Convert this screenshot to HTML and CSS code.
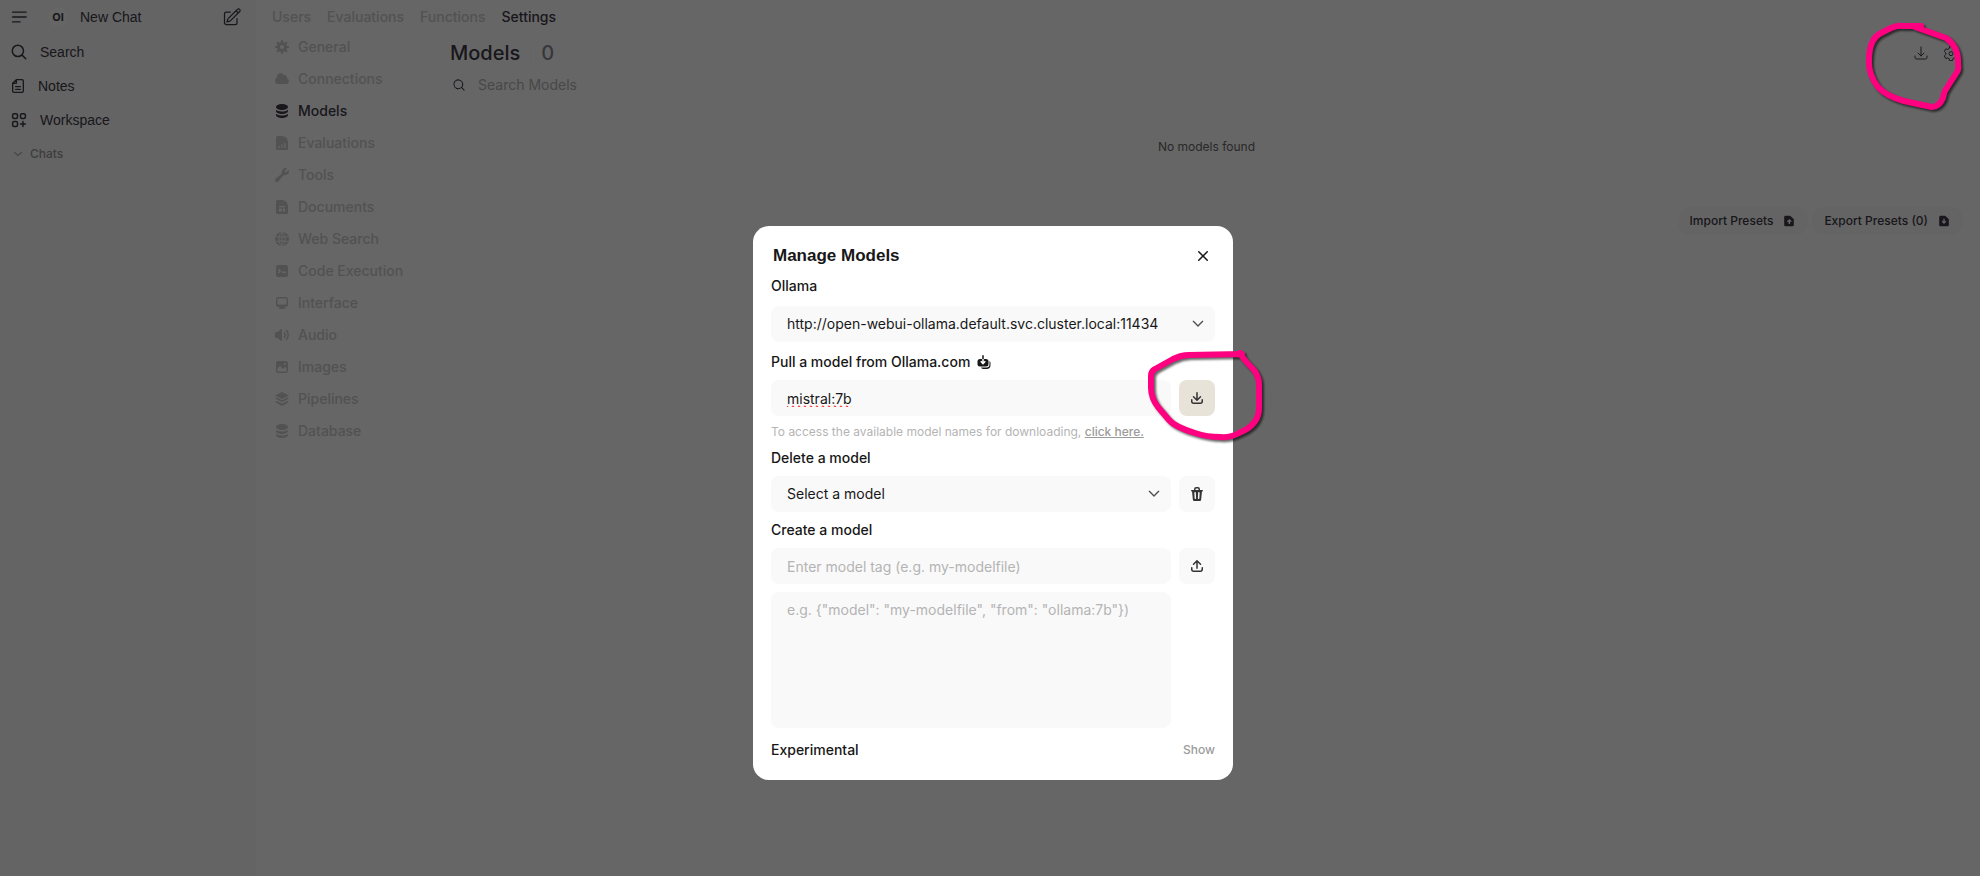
FILE: index.html
```html
<!DOCTYPE html>
<html lang="en">
<head>
    <meta charset="UTF-8">
    <meta name="viewport" content="width=device-width, initial-scale=1.0">
    <title>Open WebUI</title>
    <link rel="stylesheet" href="styles.css">
</head>
<body>
    <div class="app">
        <aside class="sidebar">
            <div class="sidebar-top">
                <button class="icon-button" aria-label="Toggle sidebar">
                    <svg class="icon-18" viewBox="0 0 24 24" fill="none" stroke="currentColor" stroke-width="1.8" stroke-linecap="round"><path d="M3.5 5.500h18M3.5 12h18M3.5 18.500h10"/></svg>
                </button>
                <a class="new-chat" href="#"><span class="logo">OI</span>New Chat</a>
                <button class="icon-button" aria-label="New chat">
                    <svg class="icon-20" viewBox="0 0 24 24" fill="none" stroke="currentColor" stroke-width="1.5" stroke-linecap="round" stroke-linejoin="round"><path d="m16.862 4.487 1.687-1.688a1.875 1.875 0 1 1 2.652 2.652L10.582 16.070a4.500 4.500 0 0 1-1.897 1.130L6 18l.8-2.685a4.500 4.500 0 0 1 1.130-1.897l8.932-8.931Zm0 0L19.500 7.125M18 14v4.750A2.250 2.250 0 0 1 15.750 21H5.250A2.250 2.250 0 0 1 3 18.750V8.250A2.250 2.250 0 0 1 5.250 6H10"/></svg>
                </button>
            </div>
            <nav class="sidebar-nav">
                <a class="sidebar-link" href="#">
                    <svg class="icon-18" viewBox="0 0 24 24" fill="none" stroke="currentColor" stroke-width="2" stroke-linecap="round"><circle cx="10.500" cy="10.500" r="7.500"/><path d="m21 21-5.200-5.200"/></svg>
                    Search
                </a>
                <a class="sidebar-link" href="#">
                    <svg class="icon-16" viewBox="0 0 24 24" fill="none" stroke="currentColor" stroke-width="2" stroke-linecap="round" stroke-linejoin="round"><path d="M9.500 2.500H18a2 2 0 0 1 2 2v15a2 2 0 0 1-2 2H6a2 2 0 0 1-2-2V8l5.500-5.500V8H4M8.500 13h7M8.500 17h7"/></svg>
                    Notes
                </a>
                <a class="sidebar-link" href="#">
                    <svg class="icon-18" viewBox="0 0 24 24" fill="none" stroke="currentColor" stroke-width="2" stroke-linecap="round" stroke-linejoin="round"><rect x="3.500" y="3.500" width="6.500" height="6.500" rx="2"/><rect x="14" y="3.500" width="6.500" height="6.500" rx="2"/><rect x="3.500" y="14" width="6.500" height="6.500" rx="2"/><path d="M17.250 14v6.500M14 17.250h6.500"/></svg>
                    Workspace
                </a>
            </nav>
            <button class="chats">
                <svg class="icon-12" viewBox="0 0 24 24" fill="none" stroke="currentColor" stroke-width="2.500" stroke-linecap="round" stroke-linejoin="round"><path d="m5 9 7 6 7-6"/></svg>
                Chats
            </button>
        </aside>

        <main class="main">
            <nav class="top-nav">
                <a href="#">Users</a>
                <a href="#">Evaluations</a>
                <a href="#">Functions</a>
                <a class="active" href="#">Settings</a>
            </nav>
            <div class="settings">
                <nav class="tabs">
                    <a href="#"><svg class="icon-16" viewBox="0 0 16 16" fill="currentColor"><path fill-rule="evenodd" d="M6.955 1.450A.5.5 0 0 1 7.452 1h1.096a.5.5 0 0 1 .497.450l.17 1.699c.484.120.940.312 1.356.562l1.321-1.081a.5.5 0 0 1 .67.033l.774.775a.5.5 0 0 1 .034.670l-1.080 1.320c.25.417.440.873.561 1.357l1.699.170a.5.5 0 0 1 .450.497v1.096a.5.5 0 0 1-.450.497l-1.699.170c-.120.484-.312.940-.562 1.356l1.082 1.322a.5.5 0 0 1-.034.670l-.774.774a.5.5 0 0 1-.670.033l-1.322-1.080c-.416.250-.872.440-1.356.561l-.170 1.699a.5.5 0 0 1-.497.450H7.452a.5.5 0 0 1-.497-.450l-.170-1.699a4.973 4.973 0 0 1-1.356-.562L4.108 13.370a.5.5 0 0 1-.670-.033l-.774-.775a.5.5 0 0 1-.034-.670l1.080-1.320a4.971 4.971 0 0 1-.561-1.357l-1.699-.170A.5.5 0 0 1 1 8.548V7.452a.5.5 0 0 1 .450-.497l1.699-.170c.120-.484.312-.940.562-1.356L2.629 4.107a.5.5 0 0 1 .034-.670l.774-.774a.5.5 0 0 1 .670-.033L5.430 3.710a4.970 4.970 0 0 1 1.356-.561l.170-1.699ZM6 8a2 2 0 1 0 4 0 2 2 0 0 0-4 0Z"/></svg>General</a>
                    <a href="#"><svg class="icon-16" viewBox="0 0 16 16" fill="currentColor"><path d="M1 9.500A3.500 3.500 0 0 0 4.500 13H12a3 3 0 0 0 .917-5.857 2.503 2.503 0 0 0-3.198-3.019 3.500 3.500 0 0 0-6.628 2.171A3.500 3.500 0 0 0 1 9.500Z"/></svg>Connections</a>
                    <a class="active" href="#"><svg class="icon-16" viewBox="0 0 16 16" fill="currentColor"><path d="M8 7c3.314 0 6-1.343 6-3s-2.686-3-6-3-6 1.343-6 3 2.686 3 6 3Z"/><path d="M8 8.500c1.840 0 3.579-.370 4.914-1.037A6.330 6.330 0 0 0 14 6.780V8c0 1.657-2.686 3-6 3S2 9.657 2 8V6.780c.346.273.720.500 1.087.683C4.420 8.131 6.160 8.500 8 8.500Z"/><path d="M8 12.500c1.840 0 3.579-.370 4.914-1.037.366-.183.740-.410 1.086-.684V12c0 1.657-2.686 3-6 3s-6-1.343-6-3v-1.220c.346.273.720.500 1.087.683C4.420 12.131 6.160 12.500 8 12.500Z"/></svg>Models</a>
                    <a href="#"><svg class="icon-16" viewBox="0 0 16 16" fill="currentColor"><path fill-rule="evenodd" d="M3.500 1A1.500 1.500 0 0 0 2 2.500v11A1.500 1.500 0 0 0 3.500 15h9a1.500 1.500 0 0 0 1.500-1.500V6l-5-5H3.500Zm1 10h1.300v2H4.500v-2Zm2.800-1.500h1.300V13H7.300V9.500ZM10.200 8h1.300v5h-1.300V8Z"/><path d="M10.500 1v3.500H14L10.500 1Z"/></svg>Evaluations</a>
                    <a href="#"><svg class="icon-16" viewBox="0 0 16 16" fill="currentColor"><path d="M11.500 8a3.500 3.500 0 0 0 3.362-4.476c-.094-.325-.497-.390-.736-.150L12.099 5.400a.480.480 0 0 1-.653.033 8.554 8.554 0 0 1-.879-.879.480.480 0 0 1 .033-.653l2.027-2.028c.240-.239.175-.642-.150-.736a3.502 3.502 0 0 0-4.476 3.427c.018.990-.133 2.093-.914 2.700l-5.310 4.130a2.015 2.015 0 1 0 2.828 2.827l4.130-5.309c.607-.780 1.710-.932 2.700-.914L11.500 8Z"/></svg>Tools</a>
                    <a href="#"><svg class="icon-16" viewBox="0 0 16 16" fill="currentColor"><path fill-rule="evenodd" d="M3.500 1A1.500 1.500 0 0 0 2 2.500v11A1.500 1.500 0 0 0 3.500 15h9a1.500 1.500 0 0 0 1.500-1.500V6L9 1H3.500ZM5 7h6v1.300H5V7Zm0 2.500h2.800v3H5v-3Zm4 0h2v3H9v-3Z"/><path d="M10.500 1v3.500H14L10.500 1Z"/></svg>Documents</a>
                    <a href="#"><svg class="icon-16" viewBox="0 0 16 16"><circle cx="8" cy="8" r="7" fill="currentColor"/><path class="cutout" d="M2 5.500q6 1.500 12 0M2 10.500q6-1.500 12 0M8 1v14M7.500 1C4 4.500 4 11.500 7.500 15M8.500 1c3.500 3.500 3.500 10.500 0 14" fill="none"/></svg>Web Search</a>
                    <a href="#"><svg class="icon-16" viewBox="0 0 16 16" fill="currentColor"><path fill-rule="evenodd" d="M2 4a2 2 0 0 1 2-2h8a2 2 0 0 1 2 2v8a2 2 0 0 1-2 2H4a2 2 0 0 1-2-2V4Zm2.220 1.970a.75.75 0 0 0 0 1.060l.970.970-.970.970a.75.75 0 1 0 1.060 1.060l1.500-1.500a.75.75 0 0 0 0-1.060l-1.500-1.500a.75.75 0 0 0-1.060 0ZM8.750 8.500a.75.75 0 0 0 0 1.500h2.500a.75.75 0 0 0 0-1.500h-2.500Z"/></svg>Code Execution</a>
                    <a href="#"><svg class="icon-16" viewBox="0 0 16 16" fill="currentColor"><path fill-rule="evenodd" d="M2 4.250A2.250 2.250 0 0 1 4.250 2h7.500A2.250 2.250 0 0 1 14 4.250v5.500A2.250 2.250 0 0 1 11.750 12h-1.312c.1.128.210.248.328.360a.75.75 0 0 1 .234.545v.345a.75.75 0 0 1-.75.75h-4.500a.75.75 0 0 1-.75-.75v-.345a.75.75 0 0 1 .234-.545c.118-.111.228-.232.328-.360H4.250A2.250 2.250 0 0 1 2 9.750v-5.500Zm2.250-.750a.75.75 0 0 0-.75.75v4.500c0 .414.336.75.75.75h7.500a.75.75 0 0 0 .75-.75v-4.500a.75.75 0 0 0-.75-.75h-7.500Z"/></svg>Interface</a>
                    <a href="#"><svg class="icon-16" viewBox="0 0 16 16" fill="currentColor"><path d="M7.557 2.066A.75.75 0 0 1 8 2.750v10.500a.75.75 0 0 1-1.248.560L3.590 11H2a1 1 0 0 1-1-1V6a1 1 0 0 1 1-1h1.590l3.162-2.810a.75.75 0 0 1 .805-.124ZM12.950 3.050a.75.75 0 1 0-1.060 1.060 5.500 5.500 0 0 1 0 7.780.75.75 0 1 0 1.060 1.060 7 7 0 0 0 0-9.900Z"/><path d="M10.828 5.172a.75.75 0 1 0-1.060 1.060 2.500 2.500 0 0 1 0 3.536.75.75 0 1 0 1.060 1.060 4 4 0 0 0 0-5.656Z"/></svg>Audio</a>
                    <a href="#"><svg class="icon-16" viewBox="0 0 16 16" fill="currentColor"><path fill-rule="evenodd" d="M2 4a2 2 0 0 1 2-2h8a2 2 0 0 1 2 2v8a2 2 0 0 1-2 2H4a2 2 0 0 1-2-2V4Zm10.500 5.707a.5.5 0 0 0-.146-.353l-1-1a.5.5 0 0 0-.708 0L9.354 9.646a.5.5 0 0 1-.708 0L6.354 7.354a.5.5 0 0 0-.708 0l-2 2a.5.5 0 0 0-.146.353V12a.5.5 0 0 0 .5.5h8a.5.5 0 0 0 .5-.5V9.707ZM12 5a1 1 0 1 1-2 0 1 1 0 0 1 2 0Z"/></svg>Images</a>
                    <a href="#"><svg class="icon-16" viewBox="0 0 16 16" fill="currentColor"><path d="M8 1 1 4.500 8 8l7-3.500L8 1Z"/><path d="M2.800 6.600 1 7.500 8 11l7-3.500-1.800-.900L8 9.200 2.800 6.600Z"/><path d="M2.800 10 1 11 8 15l7-4-1.800-1L8 12.700 2.800 10Z"/></svg>Pipelines</a>
                    <a href="#"><svg class="icon-16" viewBox="0 0 16 16" fill="currentColor"><path d="M8 7c3.314 0 6-1.343 6-3s-2.686-3-6-3-6 1.343-6 3 2.686 3 6 3Z"/><path d="M8 8.500c1.840 0 3.579-.370 4.914-1.037A6.330 6.330 0 0 0 14 6.780V8c0 1.657-2.686 3-6 3S2 9.657 2 8V6.780c.346.273.720.500 1.087.683C4.420 8.131 6.160 8.500 8 8.500Z"/><path d="M8 12.500c1.840 0 3.579-.370 4.914-1.037.366-.183.740-.410 1.086-.684V12c0 1.657-2.686 3-6 3s-6-1.343-6-3v-1.220c.346.273.720.500 1.087.683C4.420 12.131 6.160 12.500 8 12.500Z"/></svg>Database</a>
                </nav>

                <section class="models">
                    <div class="models-header">
                        <h1>Models</h1>
                        <span class="divider"></span>
                        <span class="count">0</span>
                        <div class="header-actions">
                            <button class="icon-button" aria-label="Manage models">
                                <svg class="icon-16" viewBox="0 0 24 24" fill="none" stroke="currentColor" stroke-width="1.500" stroke-linecap="round" stroke-linejoin="round"><path d="M3 16.500v2.250A2.250 2.250 0 0 0 5.250 21h13.500A2.250 2.250 0 0 0 21 18.750V16.500M16.500 12 12 16.500 7.500 12M12 16.500V3"/></svg>
                            </button>
                            <button class="icon-button" aria-label="Model settings">
                                <svg class="icon-16" viewBox="0 0 24 24" fill="none" stroke="currentColor" stroke-width="1.500" stroke-linejoin="round"><path d="M9.800 2.500h4.400l.7 3 2 1.200 3-.9 2.200 3.800-2.300 2.100v2.600l2.300 2.100-2.200 3.800-3-.9-2 1.200-.7 3H9.800l-.7-3-2-1.200-3 .9-2.200-3.800 2.300-2.100v-2.600L1.900 9.600l2.200-3.800 3 .9 2-1.200.7-3Z"/><circle cx="12" cy="13" r="3"/></svg>
                            </button>
                        </div>
                    </div>
                    <div class="search-row">
                        <svg class="icon-14" viewBox="0 0 20 20" fill="currentColor"><path fill-rule="evenodd" d="M9 3.500a5.500 5.500 0 1 0 0 11 5.500 5.500 0 0 0 0-11ZM2 9a7 7 0 1 1 12.452 4.391l3.328 3.329a.75.75 0 1 1-1.060 1.060l-3.329-3.328A7 7 0 0 1 2 9Z"/></svg>
                        <input type="text" placeholder="Search Models" aria-label="Search Models">
                    </div>
                    <p class="empty">No models found</p>
                    <div class="presets">
                        <button>Import Presets
                            <svg class="icon-14" viewBox="0 0 16 16" fill="currentColor"><path fill-rule="evenodd" d="M4 2a1.500 1.500 0 0 0-1.500 1.500v9A1.500 1.500 0 0 0 4 14h8a1.500 1.500 0 0 0 1.500-1.500V6.600a1.500 1.500 0 0 0-.440-1.060l-3.100-3.100A1.500 1.500 0 0 0 8.900 2H4Zm4.500 3.700 2.600 2.600-1 1-.9-.850V11.500H7.500V8.450l-.9.850-1-1 2.900-2.600Z"/></svg>
                        </button>
                        <button>Export Presets (0)
                            <svg class="icon-14" viewBox="0 0 16 16" fill="currentColor"><path fill-rule="evenodd" d="M4 2a1.500 1.500 0 0 0-1.500 1.500v9A1.500 1.500 0 0 0 4 14h8a1.500 1.500 0 0 0 1.500-1.500V6.600a1.500 1.500 0 0 0-.440-1.060l-3.100-3.100A1.500 1.500 0 0 0 8.900 2H4Zm3.200 3.500h1.600v3l.9-.850 1 1L8 11.500 5.300 8.650l1-1 .9.850v-3Z"/></svg>
                        </button>
                    </div>
                </section>
            </div>
        </main>
    </div>

    <div class="overlay">
        <div class="modal" role="dialog" aria-labelledby="modal-title">
            <div class="modal-header">
                <h2 id="modal-title">Manage Models</h2>
                <button class="icon-button" aria-label="Close">
                    <svg class="icon-20" viewBox="0 0 20 20" fill="currentColor"><path d="M6.280 5.220a.75.75 0 0 0-1.060 1.060L8.940 10l-3.720 3.720a.75.75 0 1 0 1.060 1.060L10 11.060l3.720 3.720a.75.75 0 1 0 1.060-1.060L11.060 10l3.720-3.720a.75.75 0 0 0-1.060-1.060L10 8.940 6.280 5.220Z"/></svg>
                </button>
            </div>

            <form class="modal-body">
                <div class="field server">
                    <label for="server">Ollama</label>
                    <div class="select-wrap">
                        <select id="server"><option>http://open-webui-ollama.default.svc.cluster.local:11434</option></select>
                        <svg class="icon-16" viewBox="0 0 24 24" fill="none" stroke="currentColor" stroke-width="2" stroke-linecap="round" stroke-linejoin="round"><path d="m5 8 7 7 7-7"/></svg>
                    </div>
                </div>

                <div class="field">
                    <label for="pull">Pull a model from Ollama.com
                        <svg class="icon-16" viewBox="0 0 16 16" fill="currentColor"><path d="M6.250 1.750a.75.75 0 0 1 1.500 0V5h-1.500V1.750Z"/><path fill-rule="evenodd" d="M4 5h2.250v2.700L5.300 6.750 4.200 7.850 7 10.650l2.800-2.800-1.100-1.100-.950.950V5H10a2.500 2.500 0 0 1 2.500 2.500V10A2.500 2.500 0 0 1 10 12.500H4A2.500 2.500 0 0 1 1.500 10V7.500A2.500 2.500 0 0 1 4 5Z"/><path d="M5 13.500h5.500a3 3 0 0 0 3-3V7c.600.400 1 1 1 1.750V11A4 4 0 0 1 10.500 15H7a2.300 2.300 0 0 1-2-1.500Z"/></svg>
                    </label>
                    <div class="row">
                        <input class="misspelled" id="pull" type="text" value="mistral:7b">
                        <button class="square hover" type="button" aria-label="Pull model">
                            <svg class="icon-16" viewBox="0 0 16 16" fill="currentColor"><path d="M8.750 2.750a.75.75 0 0 0-1.500 0v5.690L5.030 6.220a.75.75 0 0 0-1.060 1.060l3.500 3.500a.75.75 0 0 0 1.060 0l3.500-3.500a.75.75 0 0 0-1.060-1.060L8.750 8.440V2.750Z"/><path d="M3.500 9.750a.75.75 0 0 0-1.500 0v1.500A2.750 2.750 0 0 0 4.750 14h6.500A2.750 2.750 0 0 0 14 11.250v-1.500a.75.75 0 0 0-1.500 0v1.500c0 .690-.560 1.250-1.250 1.250h-6.500c-.690 0-1.250-.560-1.250-1.250v-1.500Z"/></svg>
                        </button>
                    </div>
                    <p class="hint">To access the available model names for downloading, <a href="#">click here.</a></p>
                </div>

                <div class="field">
                    <label for="delete">Delete a model</label>
                    <div class="row">
                        <div class="select-wrap">
                            <select id="delete"><option>Select a model</option></select>
                            <svg class="icon-16" viewBox="0 0 24 24" fill="none" stroke="currentColor" stroke-width="2" stroke-linecap="round" stroke-linejoin="round"><path d="m5 8 7 7 7-7"/></svg>
                        </div>
                        <button class="square" type="button" aria-label="Delete model">
                            <svg class="icon-16" viewBox="0 0 16 16" fill="currentColor"><path fill-rule="evenodd" d="M5 3.250V4H2.750a.75.75 0 0 0 0 1.500h.3l.815 8.150A1.500 1.500 0 0 0 5.357 15h5.285a1.500 1.500 0 0 0 1.493-1.350l.815-8.150h.3a.75.75 0 0 0 0-1.500H11v-.75A2.250 2.250 0 0 0 8.750 1h-1.500A2.250 2.250 0 0 0 5 3.250Zm2.250-.75a.75.75 0 0 0-.75.75V4h3v-.75a.75.75 0 0 0-.75-.75h-1.500ZM6.050 6a.75.75 0 0 1 .787.713l.275 5.500a.75.75 0 0 1-1.498.075l-.275-5.500A.75.75 0 0 1 6.050 6Zm3.900 0a.75.75 0 0 1 .712.787l-.275 5.500a.75.75 0 0 1-1.498-.075l.275-5.500a.75.75 0 0 1 .786-.711Z"/></svg>
                        </button>
                    </div>
                </div>

                <div class="field">
                    <label for="create">Create a model</label>
                    <div class="row">
                        <div class="stack">
                            <input id="create" type="text" placeholder="Enter model tag (e.g. my-modelfile)">
                            <textarea aria-label="Model definition" placeholder='e.g. {"model": "my-modelfile", "from": "ollama:7b"})'></textarea>
                        </div>
                        <button class="square" type="button" aria-label="Create model">
                            <svg class="icon-16" viewBox="0 0 16 16" fill="currentColor"><path d="M7.250 10.250a.75.75 0 0 0 1.500 0V4.560l2.220 2.220a.75.75 0 1 0 1.060-1.060l-3.500-3.500a.75.75 0 0 0-1.060 0l-3.500 3.500a.75.75 0 0 0 1.060 1.060l2.220-2.220v5.690Z"/><path d="M3.500 9.750a.75.75 0 0 0-1.500 0v1.500A2.750 2.750 0 0 0 4.750 14h6.500A2.750 2.750 0 0 0 14 11.250v-1.500a.75.75 0 0 0-1.500 0v1.500c0 .690-.560 1.250-1.250 1.250h-6.500c-.690 0-1.250-.560-1.250-1.250v-1.500Z"/></svg>
                        </button>
                    </div>
                </div>

                <div class="experimental">
                    <span>Experimental</span>
                    <button type="button">Show</button>
                </div>
            </form>

            <svg class="marker marker-pull" viewBox="0 0 130 100"><path d="M97 8 44 9Q36 9 28 13L10 23Q6 25 6 30V42Q6 52 13 61L24 74Q30 81 50 87Q62 91 75 91Q85 92 94 87Q114 79 114 62V38Q114 31 109 24Q98 13 95 7"/></svg>
        </div>
        <svg class="marker marker-top" viewBox="0 0 110 100"><path d="M62 10H44Q39 9 32 12L22 17Q10 23 10 44Q9 58 19 71Q27 80 45 85L73 91Q80 91 84 82Q85 75 89 70L98 56Q100 53 99 48Q100 31 87 22L56 11"/></svg>
    </div>
</body>
</html>
```
FILE: styles.css
```css
* {
    box-sizing: border-box;
}

body {
    margin: 0;
    font-family: Inter, "Liberation Sans", sans-serif;
    font-size: 14px;
    line-height: 20px;
    color: #171717;
    background-color: #fff;
}

h1, h2, p {
    margin: 0;
}

a {
    color: inherit;
    text-decoration: none;
}

button, input, select, textarea {
    font: inherit;
    color: inherit;
    background: none;
    border: none;
    outline: none;
    padding: 0;
}

button {
    cursor: pointer;
}

svg {
    flex-shrink: 0;
}

.icon-12 { width: 12px; height: 12px; }
.icon-14 { width: 14px; height: 14px; }
.icon-16 { width: 16px; height: 16px; }
.icon-18 { width: 18px; height: 18px; }
.icon-20 { width: 20px; height: 20px; }

.icon-button {
    display: flex;
}

/* Page */
.app {
    display: flex;
    min-height: 100vh;
    color: #403a48;
}

.sidebar {
    width: 256px;
    flex-shrink: 0;
    padding: 0 10px;
    background-color: #f9f9f9;
    font-family: "Liberation Sans", Arial, sans-serif;
}

.sidebar-top {
    display: flex;
    align-items: center;
    height: 34px;
    padding-right: 4px;
}

.new-chat {
    display: flex;
    align-items: center;
    gap: 12px;
    flex: 1;
    margin-left: 20px;
}

.logo {
    width: 20px;
    height: 20px;
    border-radius: 50%;
    background-color: #fff;
    font-family: Inter, sans-serif;
    font-size: 11px;
    font-weight: 700;
    text-align: center;
}

.sidebar-nav {
    padding-top: 1px;
}

.sidebar-link {
    display: flex;
    align-items: center;
    gap: 12px;
    height: 34px;
}

.chats {
    display: flex;
    align-items: center;
    gap: 6px;
    height: 34px;
    padding-left: 2px;
    font-family: Inter, sans-serif;
    font-size: 12px;
    font-weight: 500;
    color: #9b9b9b;
}

.chats svg {
    color: #b4b4b4;
}

.main {
    flex: 1;
    padding: 0 17px 0 16px;
    font-weight: 500;
}

.top-nav {
    display: flex;
    align-items: center;
    gap: 16px;
    height: 34px;
    color: #cdcdcd;
}

.active {
    color: #403a48;
}

.settings {
    display: flex;
}

.tabs {
    display: flex;
    flex-direction: column;
    gap: 12px;
    width: 178px;
    padding: 3px 2px;
    color: #cdcdcd;
}

.tabs a {
    display: flex;
    align-items: center;
    gap: 8px;
}

.cutout {
    stroke: #fff;
}

/* Models list */
.models {
    flex: 1;
}

.models-header {
    display: flex;
    align-items: center;
    height: 38px;
    font-size: 20px;
}

.models-header h1 {
    font-size: 20px;
    font-weight: 500;
}

.divider {
    width: 1px;
    height: 24px;
    margin: 0 10px;
    background-color: #f9f9f9;
}

.count {
    color: #8a8a94;
}

.header-actions {
    display: flex;
    gap: 14px;
    margin-left: auto;
    padding-right: 4px;
}

.search-row {
    display: flex;
    align-items: center;
    gap: 12px;
    height: 26px;
    padding-left: 2px;
    font-weight: 400;
}

.search-row input {
    flex: 1;
}

::placeholder {
    color: #b4b4b4;
    opacity: 1;
}

.empty {
    margin: 39px 0 50px;
    font-size: 12px;
    text-align: center;
    font-weight: 400;
    color: #676767;
}

.presets {
    display: flex;
    justify-content: flex-end;
    gap: 4px;
}

.presets button {
    display: flex;
    align-items: center;
    gap: 9px;
    height: 28px;
    padding: 0 12px;
    border-radius: 12px;
    background-color: #f9f9f9;
    font-size: 12px;
    font-weight: 500;
}

/* Modal */
.overlay {
    position: fixed;
    inset: 0;
    display: flex;
    padding: 130px 0 0 6px;
    background-color: rgba(0, 0, 0, 0.6);
}

.modal {
    position: relative;
    width: 480px;
    max-width: 100%;
    margin: auto;
    padding: 18px 18px 20px;
    border-radius: 16px;
    background-color: #fff;
}

.modal-header {
    display: flex;
    align-items: center;
    justify-content: space-between;
    height: 24px;
    margin-bottom: 8px;
    padding: 0 2px;
}

.modal-header h2 {
    font-family: "Liberation Sans", Arial, sans-serif;
    font-size: 17px;
    font-weight: 700;
}

.modal-body {
    display: flex;
    flex-direction: column;
    gap: 8px;
}

.field {
    display: flex;
    flex-direction: column;
    gap: 8px;
}

.field.server {
    gap: 10px;
    margin-bottom: 2px;
}

.field label {
    display: flex;
    align-items: center;
    gap: 6px;
    font-weight: 500;
}

.modal-body input,
.modal-body select,
.modal-body textarea,
.square {
    width: 100%;
    height: 36px;
    border-radius: 8px;
    background-color: #f9f9f9;
}

.modal-body input,
.modal-body select,
.modal-body textarea {
    display: block;
    padding: 0 16px;
    appearance: none;
}

.modal-body .misspelled {
    text-decoration: spelling-error;
}

.modal-body textarea {
    height: 136px;
    padding: 8px 16px;
    resize: none;
}

.select-wrap {
    display: grid;
    align-items: center;
    flex: 1;
}

.select-wrap > * {
    grid-area: 1 / 1;
}

.select-wrap svg {
    justify-self: end;
    margin-right: 9px;
    color: #4e4e4e;
    pointer-events: none;
}

.row {
    display: flex;
    align-items: flex-start;
    gap: 8px;
}

.stack {
    display: flex;
    flex-direction: column;
    flex: 1;
    gap: 8px;
}

.modal-body .square {
    display: flex;
    align-items: center;
    justify-content: center;
    width: 36px;
    flex-shrink: 0;
    color: #333;
}

.modal-body .hover {
    background-color: #e8e3d9;
}

.hint {
    font-size: 12px;
    line-height: 16px;
    color: #b4b4b4;
}

.hint a {
    font-weight: 500;
    color: #9b9b9b;
    text-decoration: underline;
}

.experimental {
    display: flex;
    align-items: center;
    justify-content: space-between;
    margin-top: 4px;
    font-weight: 500;
}

.experimental button {
    font-size: 12px;
    font-weight: 500;
    color: #9b9b9b;
}

/* Hand-drawn marks */
.marker {
    position: absolute;
    fill: none;
    stroke: #ff0080;
    stroke-width: 6;
    stroke-linecap: round;
    stroke-linejoin: round;
    filter: drop-shadow(2px 2px 1px rgba(0, 0, 0, 0.6));
    pointer-events: none;
}

.marker-pull {
    top: 120px;
    right: -42px;
    width: 130px;
    height: 100px;
}

.marker-top {
    top: 16px;
    right: 11px;
    width: 110px;
    height: 100px;
}
```
